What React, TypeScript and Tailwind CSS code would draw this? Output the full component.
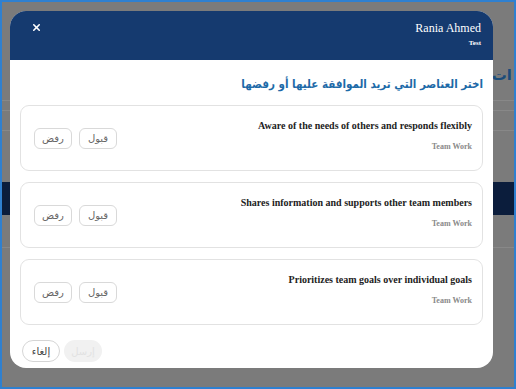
import { X } from "lucide-react"

const items = [
  "Aware of the needs of others and responds flexibly",
  "Shares information and supports other team members",
  "Prioritizes team goals over individual goals",
]

const serif = { fontFamily: '"Liberation Serif", "DejaVu Serif", serif' }

function ItemCard({ text }: { text: string }) {
  return (
    <div className="flex h-[66px] items-start justify-between rounded-[9px] border border-[#e2e2e2] bg-white pl-[13px] pr-[10px]">
      <div className="mt-[22px] flex gap-[7px]" dir="rtl">
        <button className="h-[21px] w-[38px] rounded-[6px] border border-[#d9d9d9] text-[10px] text-[#666] font-['DejaVu_Sans',sans-serif]">
          قبول
        </button>
        <button className="h-[21px] w-[38px] rounded-[6px] border border-[#d9d9d9] text-[10px] text-[#666] font-['DejaVu_Sans',sans-serif]">
          رفض
        </button>
      </div>
      <div className="flex flex-col items-end pt-[12px]" style={serif}>
        <div className="text-[10px] font-bold leading-[16px] text-[#222]">{text}</div>
        <div className="mt-[7px] text-[8px] font-bold leading-[12px] text-[#8a8a8a]">Team Work</div>
      </div>
    </div>
  )
}

export default function App() {
  return (
    <div className="relative h-[389px] w-[516px] overflow-hidden border-2 border-[#2f80d0] bg-[#7b7b7b]">
      {/* dimmed page behind the modal */}
      <div className="flex flex-col">
        <div className="flex h-[98px] justify-end pr-[2px] pt-[64px]">
          <span className="text-[15px] font-bold leading-[18px] text-[#1b4c7a] font-['DejaVu_Sans',sans-serif]" dir="rtl">
            ات ا
          </span>
        </div>
        <div className="h-px bg-[#888]" />
        <div className="h-[9px]" />
        <div className="h-px bg-[#888]" />
        <div className="h-[19px]" />
        <div className="h-px bg-[#888]" />
        <div className="h-[51px]" />
        <div className="h-[33px] bg-[#0b1d3c]" />
        <div className="h-[32px]" />
        <div className="h-px bg-[#888]" />
      </div>

      {/* modal */}
      <div className="absolute left-[8px] top-[9px] flex h-[357px] w-[483px] flex-col overflow-hidden rounded-[16px] bg-white">
        <div className="flex h-[49px] items-start justify-between bg-[#153a6f] pl-[21px] pr-[12px]">
          <X className="mt-[11px] h-[11px] w-[11px] text-white" strokeWidth={3.5} />
          <div className="flex flex-col items-end pt-[9px] text-white" style={serif}>
            <div className="text-[12px] leading-[16px]">Rania Ahmed</div>
            <div className="mt-[3px] text-[7px] font-bold leading-[9px]">Test</div>
          </div>
        </div>

        <div className="flex flex-1 flex-col px-[10px]">
          <div
            className="pt-[15px] pb-[12px] text-right text-[11.5px] font-bold leading-[18px] text-[#1d6aa8] font-['DejaVu_Sans_Condensed','DejaVu_Sans',sans-serif]"
            dir="rtl"
          >
            اختر العناصر التي تريد الموافقة عليها أو رفضها
          </div>
          <div className="flex flex-col gap-[11px]">
            {items.map((t) => (
              <ItemCard key={t} text={t} />
            ))}
          </div>
          <div className="mt-[15px] flex gap-[4px] pl-[2px]">
            <button className="h-[22px] w-[38px] rounded-full border border-[#d5d5d5] text-[10px] text-[#444] font-['DejaVu_Sans',sans-serif]">
              إلغاء
            </button>
            <button className="h-[22px] w-[38px] rounded-full bg-[#f1f1f1] text-[10px] text-[#e2e2e2] font-['DejaVu_Sans',sans-serif]">
              إرسل
            </button>
          </div>
        </div>
      </div>
    </div>
  )
}
